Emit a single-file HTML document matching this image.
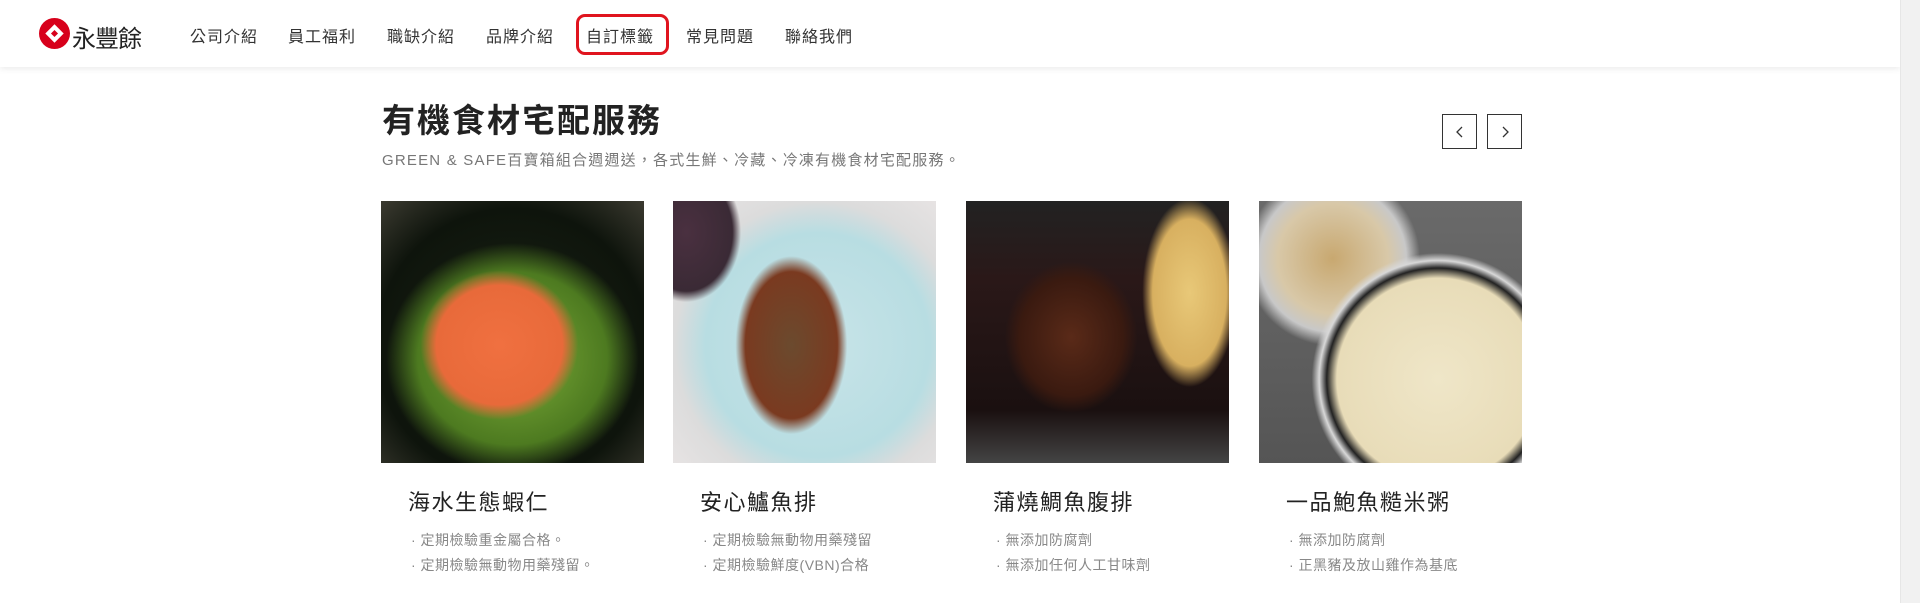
<!DOCTYPE html>
<html><head><meta charset="utf-8"><style>
*{margin:0;padding:0;box-sizing:border-box}
body{width:1920px;height:603px;overflow:hidden;background:#fff;font-family:"Liberation Sans","Noto Sans CJK TC",sans-serif;position:relative}
.hdr{position:absolute;left:0;top:0;width:1900px;height:67px;background:#fff;box-shadow:0 2px 6px rgba(0,0,0,.08)}
.sb{position:absolute;right:0;top:0;width:20px;height:603px;background:#f1f1f1;border-left:1px solid #e6e6e6}
.logo{position:absolute;left:39px;top:18px;width:31px;height:31px;border-radius:50%;background:#d7001b}
.logo:after{content:"";position:absolute;left:9px;top:9px;width:13px;height:13px;background:#fff;transform:rotate(45deg)}
.logo i{position:absolute;left:13px;top:13px;width:5px;height:5px;background:#d7001b;transform:rotate(45deg);z-index:2}
.lt{position:absolute;left:72px;top:19px;font-size:24px;color:#222;letter-spacing:-1px}
.nav{position:absolute;top:23px;font-size:16px;color:#333;letter-spacing:1px}
.red{position:absolute;left:576px;top:14px;width:93px;height:41px;border:3px solid #e0141e;border-radius:9px}
h1{position:absolute;left:382px;top:94px;font-size:33px;font-weight:bold;color:#222;letter-spacing:2px}
.sub{position:absolute;left:382px;top:149px;font-size:15px;color:#777;letter-spacing:1.2px}
.btn{position:absolute;top:114px;width:35px;height:35px;border:1px solid #333}
.btn svg{position:absolute;left:11px;top:11px}
.img{position:absolute;top:201px;width:263px;height:262px;overflow:hidden}
.ct{position:absolute;top:485px;font-size:22px;color:#222;letter-spacing:1.5px}
.li{position:absolute;font-size:14px;color:#888;letter-spacing:.5px}
</style></head><body>
<div class="hdr">
<div class="logo"><i></i></div><div class="lt">永豐餘</div>
<div class="nav" style="left:190px">公司介紹</div>
<div class="nav" style="left:288px">員工福利</div>
<div class="nav" style="left:387px">職缺介紹</div>
<div class="nav" style="left:486px">品牌介紹</div>
<div class="nav" style="left:586px">自訂標籤</div>
<div class="nav" style="left:686px">常見問題</div>
<div class="nav" style="left:785px">聯絡我們</div>
<div class="red"></div>
</div>
<div class="sb"></div>
<h1>有機食材宅配服務</h1>
<div class="sub">GREEN &amp; SAFE百寶箱組合週週送，各式生鮮、冷藏、冷凍有機食材宅配服務。</div>
<div class="btn" style="left:1442px"><svg width="12" height="12"><path d="M8 1 L3 6 L8 11" fill="none" stroke="#333" stroke-width="1.3"/></svg></div>
<div class="btn" style="left:1487px"><svg width="12" height="12"><path d="M4 1 L9 6 L4 11" fill="none" stroke="#333" stroke-width="1.3"/></svg></div>

<div class="img" style="left:381px;background:radial-gradient(ellipse 40% 38% at 45% 55%,#f07040 0,#e86a3a 60%,transparent 75%),radial-gradient(ellipse 60% 55% at 50% 60%,#7fae3a 0,#4d7a20 60%,transparent 80%),radial-gradient(circle at 50% 55%,#1a2414 0,#0e140c 70%,#3b3a30 100%)"></div>
<div class="img" style="left:673px;background:radial-gradient(ellipse 25% 40% at 45% 55%,#6b4a2e 0,#7a3a20 70%,transparent 85%),radial-gradient(ellipse 22% 28% at 5% 12%,#4a3040 0,#3a2a35 80%,transparent 95%),radial-gradient(circle at 55% 55%,#c8e4e8 0,#b8dde2 55%,#dcdcdc 70%,#ebe6e6 100%)"></div>
<div class="img" style="left:966px;background:radial-gradient(ellipse 28% 32% at 40% 52%,#5a2a18 0,#3a1a10 70%,transparent 90%),radial-gradient(ellipse 20% 40% at 85% 35%,#e8c878 0,#d8b060 70%,transparent 90%),linear-gradient(180deg,#222 0,#2a1818 30%,#1a1010 80%,#444 100%)"></div>
<div class="img" style="left:1259px;background:radial-gradient(circle at 68% 68%,#efe6c8 0,#e8dcb8 40%,#222 44%,#d8d8d8 47%,transparent 50%),radial-gradient(ellipse 35% 35% at 28% 22%,#c8a870 0,#d8c8a8 60%,#c8c8c8 80%,transparent 95%),linear-gradient(#6a6a6a,#555)"></div>

<div class="ct" style="left:408px">海水生態蝦仁</div>
<div class="li" style="left:411px;top:530px">· 定期檢驗重金屬合格。</div>
<div class="li" style="left:411px;top:555px">· 定期檢驗無動物用藥殘留。</div>
<div class="ct" style="left:700px">安心鱸魚排</div>
<div class="li" style="left:703px;top:530px">· 定期檢驗無動物用藥殘留</div>
<div class="li" style="left:703px;top:555px">· 定期檢驗鮮度(VBN)合格</div>
<div class="ct" style="left:993px">蒲燒鯛魚腹排</div>
<div class="li" style="left:996px;top:530px">· 無添加防腐劑</div>
<div class="li" style="left:996px;top:555px">· 無添加任何人工甘味劑</div>
<div class="ct" style="left:1286px">一品鮑魚糙米粥</div>
<div class="li" style="left:1289px;top:530px">· 無添加防腐劑</div>
<div class="li" style="left:1289px;top:555px">· 正黑豬及放山雞作為基底</div>
</body></html>
